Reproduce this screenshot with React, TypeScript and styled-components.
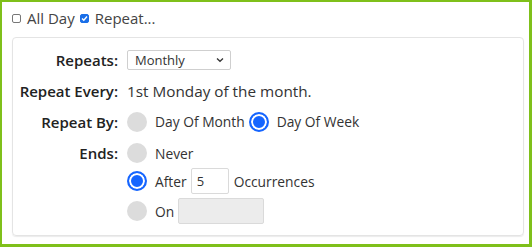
import styled, { createGlobalStyle } from "styled-components";

const GlobalStyle = createGlobalStyle`
    html, body { margin:0; padding:0; background:#fff; }
    body { font-family:"Open Sans", "Liberation Sans", sans-serif; color:#333; }
`;

const Frame = styled.div`
    width:532px;height:247px;box-sizing:border-box;
    border-style:solid;border-color:#7fc01a;
    border-width:2px 3px 3px 2px;
    padding:6px 5px 0 10px;
    display:flex;flex-direction:column;
`;

const TopRow = styled.div`
    display:flex;align-items:center;height:20px;
    font-size:15px;color:#444;
`;

const Check = styled.span<{ checked?: boolean }>`
    width:9px;height:9px;box-sizing:border-box;border-radius:2px;
    display:inline-flex;align-items:center;justify-content:center;
    border:1px solid ${(p) => (p.checked ? "#1a6fe8" : "#777")};
    background:${(p) => (p.checked ? "#1a6fe8" : "#fff")};
    margin-right:6px;
`;

const CheckLabel = styled.span`
    margin-right:5px;
`;

const Panel = styled.div`
    margin-top:9px;
    border:1px solid #e4e4e4;border-radius:4px;
    box-shadow:0 1px 1px rgba(0,0,0,0.08);
    padding:6px 0 11px 0;
`;

const Row = styled.div<{ h?: number }>`
    display:flex;align-items:${(p) => (p.h ? "center" : "flex-start")};
    height:${(p) => (p.h ? `${p.h}px` : "auto")};
    margin-top:${(p) => (p.h ? 0 : 5)}px;
`;

const Label = styled.div<{ lh?: number }>`
    width:105px;flex:none;text-align:right;
    font-size:15px;font-weight:600;color:#222;
    line-height:${(p) => p.lh ?? 20}px;
    margin-right:9px;
`;

const Text = styled.span`
    font-size:15.3px;color:#333;
`;

const SelectBox = styled.div`
    position:relative;width:104px;height:20px;box-sizing:border-box;
    border:1px solid #cfcfcf;border-radius:2px;
    font-size:13px;color:#333;
    display:flex;align-items:center;padding-left:7px;
    svg{ position:absolute; right:6px; top:6px; }
`;

const Options = styled.div`
    display:flex;flex-direction:column;gap:4px;
`;

const Option = styled.div<{ h: number }>`
    display:flex;align-items:center;height:${(p) => p.h}px;
`;

const Radio = styled.span<{ checked?: boolean }>`
    width:20px;height:20px;box-sizing:border-box;border-radius:50%;flex:none;
    background:${(p) => (p.checked ? "#1565ff" : "#dcdcdc")};
    border:${(p) => (p.checked ? "2px solid #1565ff" : "none")};
    box-shadow:${(p) => (p.checked ? "inset 0 0 0 2px #fff" : "none")};
    margin-right:8px;
`;

const OptText = styled.span<{ gap?: number }>`
    font-size:13.8px;color:#333;margin-right:${(p) => p.gap ?? 0}px;
`;

const Field = styled.div<{ w: number; disabled?: boolean }>`
    width:${(p) => p.w}px;height:26px;box-sizing:border-box;
    border:1px solid #dadada;border-radius:2px;
    background:${(p) => (p.disabled ? "#ececec" : "#fff")};
    font-size:13px;color:#333;
    display:flex;align-items:center;padding-left:5px;
    margin:0 5px 0 4px;
`;

const App = () => {
    return (
        <>
            <GlobalStyle />
            <Frame>
                <TopRow>
                    <Check />
                    <CheckLabel>All Day</CheckLabel>
                    <Check checked>
                        <svg width="7" height="7" viewBox="0 0 7 7">
                            <path d="M1 3.6 L2.8 5.3 L6 1.5" stroke="#fff" strokeWidth="1.4" fill="none" />
                        </svg>
                    </Check>
                    <span>Repeat...</span>
                </TopRow>
                <Panel>
                    <Row h={31}>
                        <Label>Repeats:</Label>
                        <SelectBox>
                            Monthly
                            <svg width="8" height="6" viewBox="0 0 8 6">
                                <path d="M1 1.5 L4 4.3 L7 1.5" stroke="#333" strokeWidth="1.3" fill="none" />
                            </svg>
                        </SelectBox>
                    </Row>
                    <Row h={31}>
                        <Label>Repeat Every:</Label>
                        <Text>1st Monday of the month.</Text>
                    </Row>
                    <Row h={31}>
                        <Label>Repeat By:</Label>
                        <Radio />
                        <OptText gap={4}>Day Of Month</OptText>
                        <Radio checked />
                        <OptText>Day Of Week</OptText>
                    </Row>
                    <Row>
                        <Label lh={22}>Ends:</Label>
                        <Options>
                            <Option h={22}>
                                <Radio />
                                <OptText>Never</OptText>
                            </Option>
                            <Option h={26}>
                                <Radio checked />
                                <OptText>After</OptText>
                                <Field w={38}>5</Field>
                                <OptText>Occurrences</OptText>
                            </Option>
                            <Option h={26}>
                                <Radio />
                                <OptText>On</OptText>
                                <Field w={86} disabled />
                            </Option>
                        </Options>
                    </Row>
                </Panel>
            </Frame>
        </>
    );
};

export default App;
